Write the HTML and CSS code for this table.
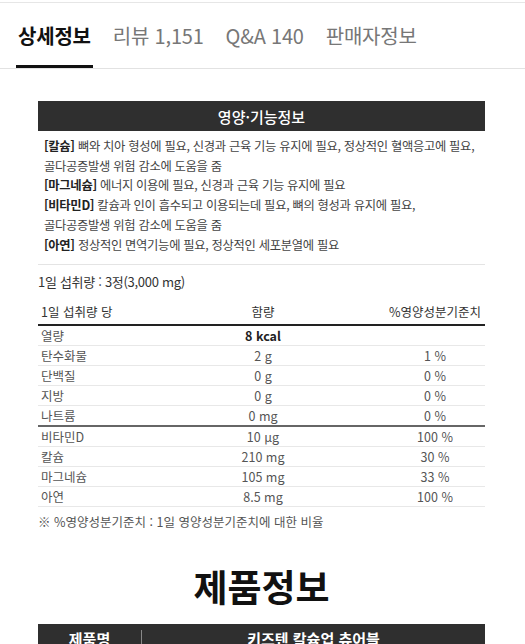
FILE: index.html
```html
<!DOCTYPE html>
<html lang="ko">
<head>
<meta charset="utf-8">
<link rel="stylesheet" href="styles.css">
</head>
<body>
<nav class="tabs">
  <a class="tab active">상세정보</a>
  <a class="tab">리뷰 1,151</a>
  <a class="tab">Q&amp;A 140</a>
  <a class="tab">판매자정보</a>
</nav>
<main class="detail">
  <section class="func">
    <h2 class="bar-title">영양·기능정보</h2>
    <div class="func-text">
      <p><b>[칼슘]</b> 뼈와 치아 형성에 필요, 신경과 근육 기능 유지에 필요, 정상적인 혈액응고에 필요,<br>골다공증발생 위험 감소에 도움을 줌</p>
      <p><b>[마그네슘]</b> 에너지 이용에 필요, 신경과 근육 기능 유지에 필요</p>
      <p><b>[비타민D]</b> 칼슘과 인이 흡수되고 이용되는데 필요, 뼈의 형성과 유지에 필요,<br>골다공증발생 위험 감소에 도움을 줌</p>
      <p><b>[아연]</b> 정상적인 면역기능에 필요, 정상적인 세포분열에 필요</p>
    </div>
  </section>
  <p class="dose">1일 섭취량 : 3정(3,000 mg)</p>
  <div class="nutri">
    <div class="row head"><span>1일 섭취량 당</span><span>함량</span><span>%영양성분기준치</span></div>
    <div class="row"><span>열량</span><span class="strong">8 kcal</span><span></span></div>
    <div class="row"><span>탄수화물</span><span>2 g</span><span>1 %</span></div>
    <div class="row"><span>단백질</span><span>0 g</span><span>0 %</span></div>
    <div class="row"><span>지방</span><span>0 g</span><span>0 %</span></div>
    <div class="row split"><span>나트륨</span><span>0 mg</span><span>0 %</span></div>
    <div class="row"><span>비타민D</span><span>10 μg</span><span>100 %</span></div>
    <div class="row"><span>칼슘</span><span>210 mg</span><span>30 %</span></div>
    <div class="row"><span>마그네슘</span><span>105 mg</span><span>33 %</span></div>
    <div class="row"><span>아연</span><span>8.5 mg</span><span>100 %</span></div>
  </div>
  <p class="note">※ %영양성분기준치 : 1일 영양성분기준치에 대한 비율</p>
  <h1 class="big-title">제품정보</h1>
  <div class="prod">
    <span class="prod-k">제품명</span>
    <span class="prod-v">키즈텐 칼슘업 츄어블</span>
  </div>
</main>
</body>
</html>
```
FILE: styles.css
```css
* { box-sizing: border-box; }
html, body { margin: 0; padding: 0; background: #fff; }
body {
  font-family: "Noto Sans CJK KR", "Noto Sans", sans-serif;
  color: #333;
  width: 525px;
  overflow: hidden;
}
.tabs {
  margin-top: 2px;
  border-top: 1px solid #e6e6e6;
  border-bottom: 1px solid #e2e2e2;
  display: flex;
  gap: 18px;
  padding: 0 0 0 16px;
  height: 67px;
  align-items: stretch;
}
.tab {
  display: flex;
  align-items: center;
  padding: 2px 2px 0;
  font-size: 20px;
  color: #777;
  border-bottom: 3px solid transparent;
  letter-spacing: -0.2px;
}
.tab.active {
  color: #111;
  font-weight: 700;
  border-bottom-color: #111;
}
.detail { padding: 32px 40px 0 38px; }
.bar-title {
  margin: 0;
  height: 30px;
  background: #2f2f2f;
  color: #fff;
  font-size: 15px;
  font-weight: 500;
  display: flex;
  align-items: center;
  justify-content: center;
}
.func-text {
  padding: 6px 6px 9px;
  border-bottom: 1px solid #e4e4e4;
  font-size: 12.3px;
  line-height: 19.7px;
  color: #444;
  letter-spacing: -0.3px;
}
.func-text p { margin: 0; }
.func-text b { color: #222; font-weight: 700; }
.dose {
  margin: 7px 0 10px;
  font-size: 13px;
  line-height: 20px;
  color: #333;
  letter-spacing: -0.3px;
}
.nutri { font-size: 12.5px; color: #555; }
.row {
  display: grid;
  grid-template-columns: 100px 1fr 100px;
  height: 20px;
  line-height: 19px;
  border-bottom: 1px solid #e8e8e8;
  padding-left: 3px;
}
.row span:nth-child(2), .row span:nth-child(3) { text-align: center; }
.row.head {
  height: 24px;
  line-height: 20px;
  border-bottom: 2px solid #222;
  color: #333;
}
.row.split { border-bottom: 2px solid #666; height: 21px; }
.strong { font-weight: 700; color: #222; }
.note {
  margin: 5px 0 0;
  font-size: 12.5px;
  line-height: 20px;
  color: #555;
}
.big-title {
  margin: 29px 0 0;
  text-align: center;
  font-size: 37px;
  font-weight: 700;
  color: #111;
  line-height: 50px;
  letter-spacing: 0;
}
.prod {
  margin-top: 13px;
  background: #2f2f2f;
  color: #fff;
  display: grid;
  grid-template-columns: 104px 1fr;
  height: 40px;
  padding-top: 6px;
  font-size: 15px;
  font-weight: 700;
}
.prod-k { text-align: center; border-right: 1px solid #888; height: 20px; line-height: 18px; }
.prod-v { text-align: center; line-height: 18px; }
```
